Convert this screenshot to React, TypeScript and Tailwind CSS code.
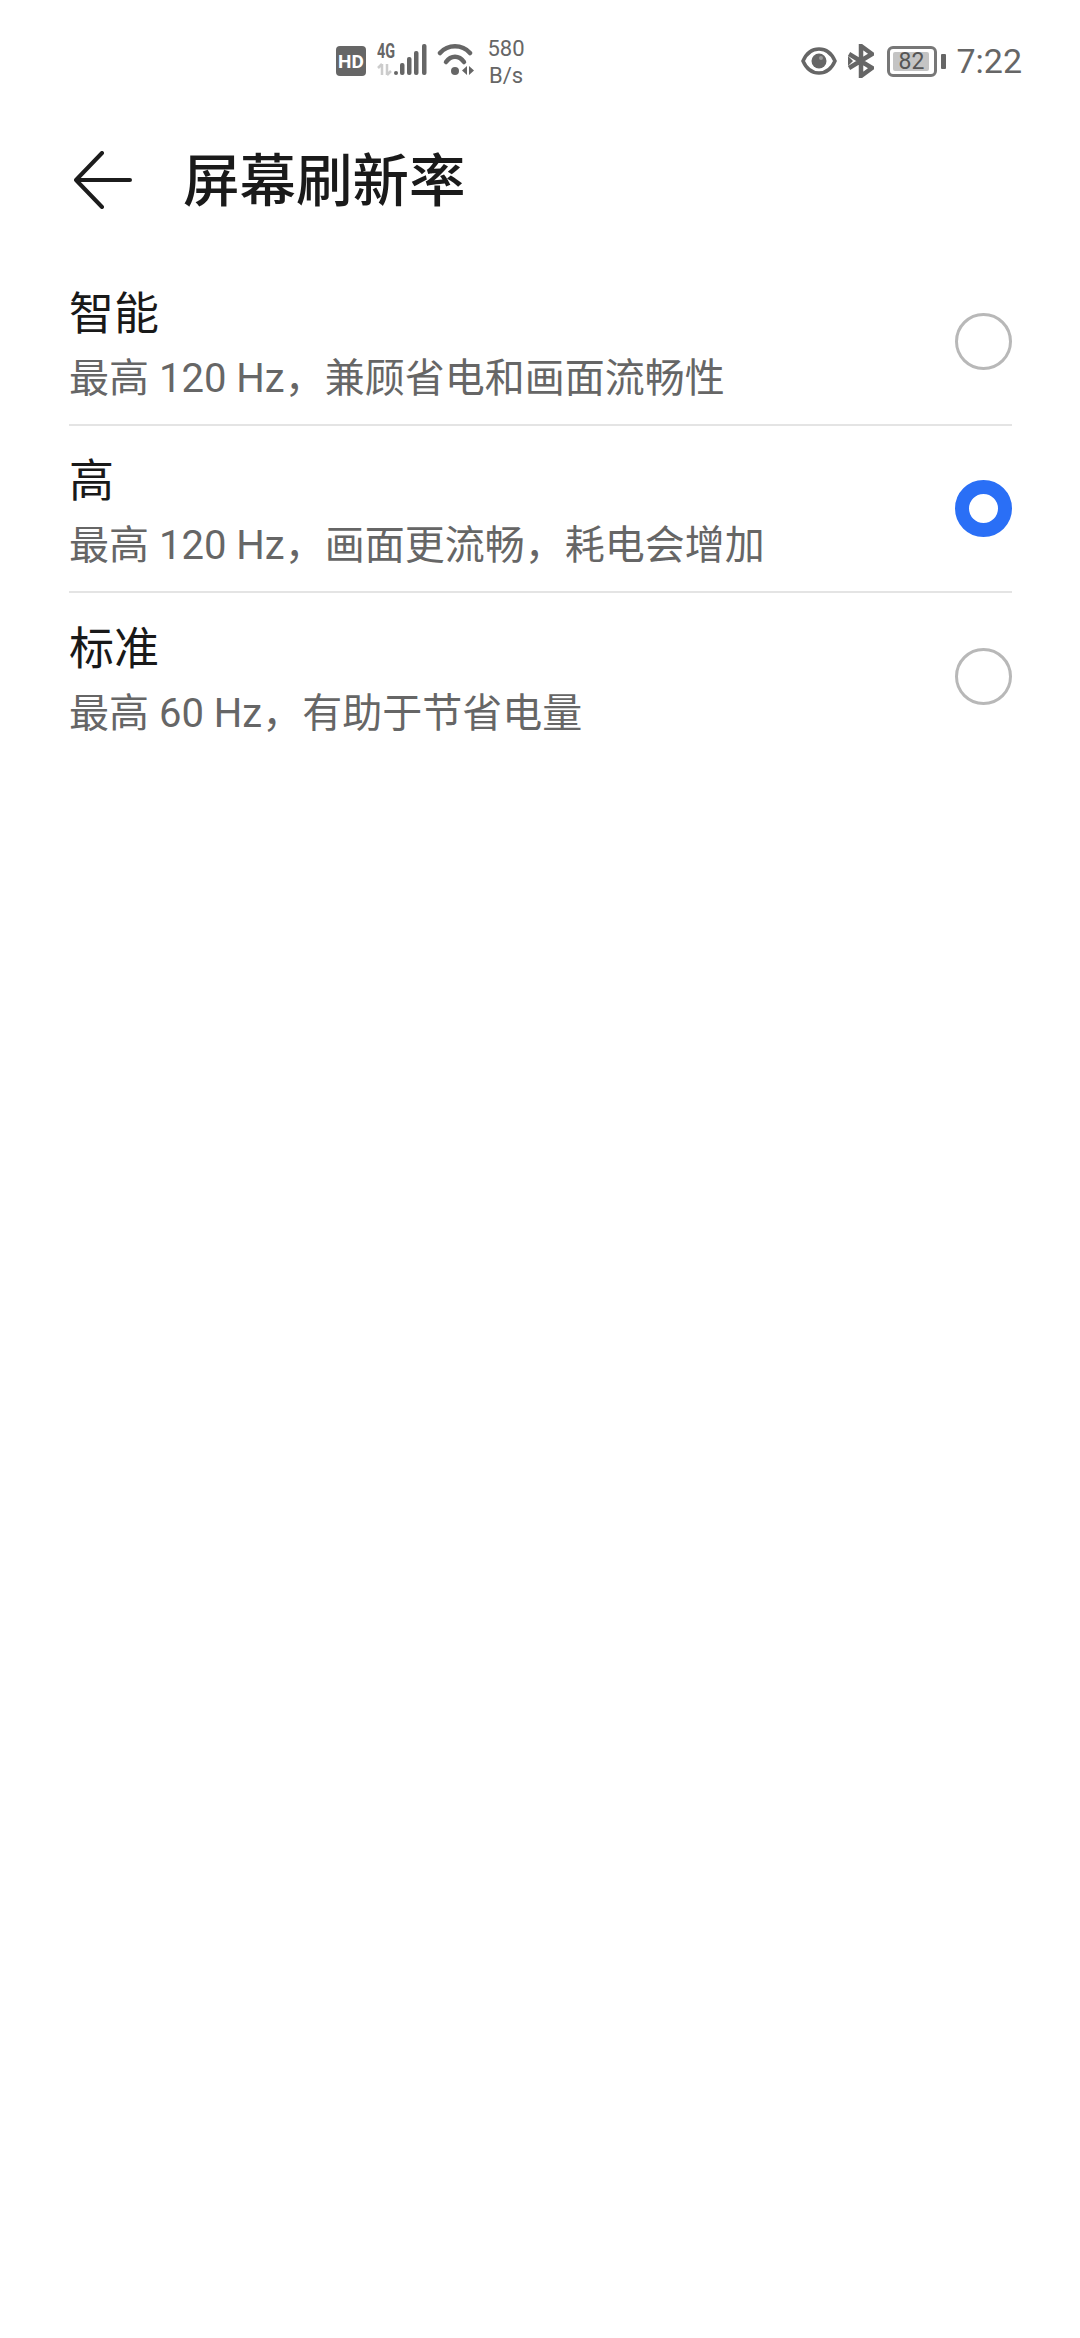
import React from "react";

const font = { fontFamily: '"Roboto", "Noto Sans CJK SC", sans-serif' };

const options = [
  { title: "智能", sub: "最高 120 Hz，兼顾省电和画面流畅性", checked: false },
  { title: "高", sub: "最高 120 Hz，画面更流畅，耗电会增加", checked: true },
  { title: "标准", sub: "最高 60 Hz，有助于节省电量", checked: false },
];

const Signal = () => (
  <div className="relative w-[51px] h-[34px] ml-[11px]">
    <span className="absolute left-0 top-[-3px] origin-left scale-x-[0.72] text-[20px] leading-[20px] font-bold text-[#666]">4G</span>
    <svg className="absolute left-0 top-0" width="51" height="34" viewBox="0 0 51 34">
      <g stroke="#ccc" strokeWidth="2.500" fill="none">
        <path d="M5 31V20M1 24l4-4M10 20v11M14 27l-4 4" />
      </g>
      <g fill="#666">
        <rect x="17" y="27" width="4" height="4" rx="2" />
        <rect x="23" y="19" width="4.500" height="12" rx="2" />
        <rect x="30" y="13" width="4.500" height="18" rx="2" />
        <rect x="37" y="7" width="4.500" height="24" rx="2" />
        <rect x="45" y="0" width="4.500" height="31" rx="2" />
      </g>
    </svg>
  </div>
);

const Wifi = () => (
  <svg className="ml-[9px]" width="40" height="34" viewBox="0 0 40 34" fill="none">
    <path d="M3 9C11 0 25 0 33 9" stroke="#666" strokeWidth="4.500" strokeLinecap="round" />
    <path d="M9 18C14 11 22 11 27 18" stroke="#666" strokeWidth="4.500" strokeLinecap="round" />
    <circle cx="18" cy="27" r="4" fill="#666" />
    <path d="M30 22v9l-5-4.500zM32 22v9l5-4.500z" fill="#666" />
  </svg>
);

const Eye = () => (
  <svg width="36" height="28" viewBox="0 0 36 28" fill="none">
    <path d="M2 14C9 -2 27 -2 34 14C27 30 9 30 2 14Z" stroke="#666" strokeWidth="3.500" />
    <circle cx="18" cy="14" r="7.500" fill="#666" />
    <circle cx="20" cy="11" r="2" fill="#999" />
  </svg>
);

const Bluetooth = () => (
  <svg width="26" height="34" viewBox="0 0 26 34" fill="none">
    <path d="M1 10L24 24L13 32V2L24 10L1 24" stroke="#666" strokeWidth="4.500" />
    <path d="M0 12l5 5l-5 5z" fill="#666" />
  </svg>
);

const Battery = () => (
  <div className="flex items-center gap-[4px]">
    <div className="w-[50px] h-[31px] rounded-[6px] border-[3px] border-[#777] p-[3px]">
      <div className="w-[36px] h-full rounded-[2px] bg-[#c4c4c4] flex items-center justify-center">
        <span className="text-[23px] leading-none text-[#555]">82</span>
      </div>
    </div>
    <div className="w-[5px] h-[15px] rounded-[1px] bg-[#666]" />
  </div>
);

const StatusBar = () => (
  <div className="h-[122px] pl-[336px] pr-[58px] flex items-center text-[#666]">
    <div className="w-[30px] h-[30px] rounded-[4px] bg-[#666] flex items-center justify-center text-white text-[19px] font-bold leading-none">
      HD
    </div>
    <Signal />
    <Wifi />
    <div className="w-[38px] ml-[10px] pt-[1px] text-center text-[22px] leading-[27px]">
      <div>580</div>
      <div>B/s</div>
    </div>
    <div className="flex-1" />
    <Eye />
    <div className="w-[11px]" />
    <Bluetooth />
    <div className="w-[13px]" />
    <Battery />
    <span className="ml-[10px] text-[34px] leading-none">7:22</span>
  </div>
);

const Radio = ({ checked }: { checked: boolean }) =>
  checked ? (
    <div className="w-[57px] h-[57px] rounded-full border-[14px] border-[#2a6ff6] bg-white shrink-0" />
  ) : (
    <div className="w-[57px] h-[57px] rounded-full border-[3px] border-[#b8b8b8] bg-white shrink-0" />
  );

export default function App() {
  return (
    <div className="w-[1080px] h-[2338px] bg-white overflow-hidden" style={font}>
      <StatusBar />
      <div className="h-[120px] pl-[74px] flex items-center">
        <svg className="mb-[4px]" width="58" height="58" viewBox="0 0 58 58" fill="none">
          <path d="M2 29H56M28 2L2 29L28 56" stroke="#1c1c1c" strokeWidth="4" strokeLinecap="round" strokeLinejoin="round" />
        </svg>
        <h1 className="ml-[51px] text-[56.500px] leading-none font-medium text-[#1a1a1a]">屏幕刷新率</h1>
      </div>
      <div className="mt-[17px] pl-[69px] pr-[68px]">
        {options.map((opt, i) => (
          <div
            key={i}
            className={`h-[167px] flex items-center justify-between ${i < options.length - 1 ? "border-b-2 border-[#e4e4e4]" : ""}`}
          >
            <div className="pt-[16px]">
              <div className="text-[45px] leading-[58px] text-[#191919]">{opt.title}</div>
              <div className="text-[40px] leading-[69px] text-[#666]">{opt.sub}</div>
            </div>
            <Radio checked={opt.checked} />
          </div>
        ))}
      </div>
    </div>
  );
}
